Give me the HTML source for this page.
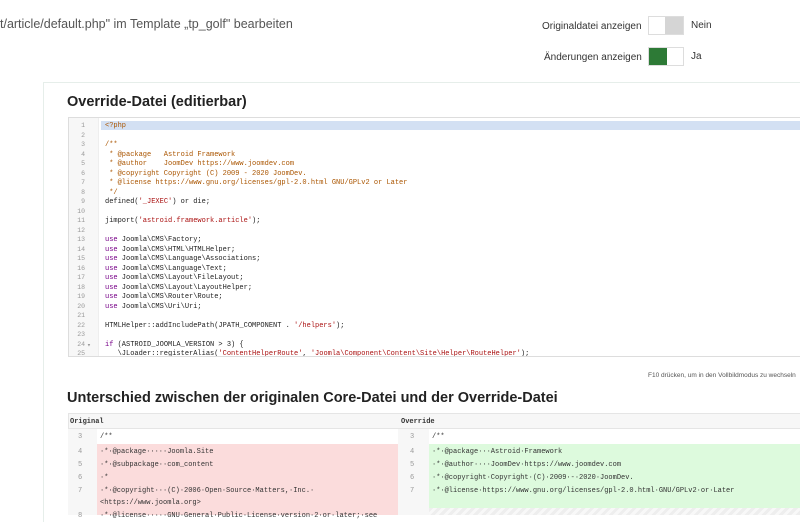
<!DOCTYPE html>
<html><head><meta charset="utf-8"><style>
*{margin:0;padding:0;box-sizing:border-box}
body{width:800px;height:515px;overflow:hidden;background:#fff;font-family:"Liberation Sans",sans-serif;position:relative;color:#333}
.a{position:absolute;white-space:pre}
.mono{font-family:"Liberation Mono","DejaVu Sans Mono",monospace}
.ed{position:absolute;left:68px;top:117px;width:740px;height:240px;border:1px solid #ddd;background:#fff;overflow:hidden}
.gut{position:absolute;left:0;top:0;width:30px;height:100%;background:#f7f7f7;border-right:1px solid #eee}
.ln{position:absolute;left:0;width:16px;text-align:right;font-size:6.5px;color:#999}
.cd{position:absolute;left:36px;font-size:7px;color:#222}
.c{color:#a50}.s{color:#a11}.k{color:#708}
.dn{position:absolute;font-size:7px;color:#999}
.dt{color:#333}
</style></head><body>
<div class="a" style="left:0;top:17px;font-size:12.5px;color:#555">t/article/default.php" im Template „tp_golf" bearbeiten</div>
<div class="a" style="left:542px;top:21px;font-size:10px;color:#333">Originaldatei anzeigen</div>
<div style="position:absolute;left:648px;top:16px;width:36px;height:19px;border:1px solid #ddd;background:#fff"><div style="position:absolute;right:0;top:0;width:18px;height:17px;background:#d5d5d5"></div></div>
<div class="a" style="left:691px;top:20px;font-size:10px">Nein</div>
<div class="a" style="left:544px;top:52px;font-size:10px;color:#333">Änderungen anzeigen</div>
<div style="position:absolute;left:648px;top:47px;width:36px;height:19px;border:1px solid #ddd;background:#fff"><div style="position:absolute;left:0;top:0;width:18px;height:17px;background:#2d7a36"></div></div>
<div class="a" style="left:691px;top:51px;font-size:10px">Ja</div>
<div style="position:absolute;left:43px;top:82px;width:770px;height:440px;border-top:1px solid #e6eeea;border-left:1px solid #e6eeea"></div>
<div class="a" style="left:67px;top:94px;font-size:14.5px;font-weight:bold;color:#222">Override-Datei (editierbar)</div>
<div class="ed mono">
<div class="gut"></div>
<div style="position:absolute;left:32px;top:3px;width:740px;height:9px;background:#d3e0f3"></div>
<div id="L"></div>
</div>
<div class="a" style="left:648px;top:372px;font-size:6.5px;color:#555">F10 drücken, um in den Vollbildmodus zu wechseln</div>
<div class="a" style="left:67px;top:390px;font-size:14.5px;font-weight:bold;color:#222">Unterschied zwischen der originalen Core-Datei und der Override-Datei</div>
<div style="position:absolute;left:68px;top:413px;width:740px;height:16px;background:#f7f7f7;border:1px solid #e5e5e5"></div>
<div class="a mono" style="left:70px;top:418px;font-size:7px;font-weight:bold">Original</div>
<div class="a mono" style="left:401px;top:418px;font-size:7px;font-weight:bold">Override</div>
<div style="position:absolute;left:68px;top:429px;width:330px;height:86px;background:#f7f7f7"></div>
<div style="position:absolute;left:398px;top:429px;width:402px;height:86px;background:#f7f7f7"></div>
<div style="position:absolute;left:97px;top:429px;width:301px;height:15px;background:#fff"></div>
<div style="position:absolute;left:97px;top:444px;width:301px;height:71px;background:#fbdcdc"></div>
<div style="position:absolute;left:429px;top:429px;width:371px;height:15px;background:#fff"></div>
<div style="position:absolute;left:429px;top:444px;width:371px;height:64px;background:#ddfadd"></div>
<div style="position:absolute;left:429px;top:508px;width:371px;height:7px;background:repeating-linear-gradient(135deg,#eee 0 3px,#f8f8f8 3px 6px)"></div>
<div class="mono dt">
<div class="dn" style="left:78px;top:433px">3</div><div class="a" style="left:100px;top:433px;font-size:7px">/**</div>
<div class="dn" style="left:78px;top:448px">4</div><div class="a" style="left:100px;top:448px;font-size:7px">·*·@package·····Joomla.Site</div>
<div class="dn" style="left:78px;top:461px">5</div><div class="a" style="left:100px;top:461px;font-size:7px">·*·@subpackage··com_content</div>
<div class="dn" style="left:78px;top:474px">6</div><div class="a" style="left:100px;top:474px;font-size:7px">·*</div>
<div class="dn" style="left:78px;top:487px">7</div><div class="a" style="left:100px;top:487px;font-size:7px">·*·@copyright···(C)·2006·Open·Source·Matters,·Inc.·</div>
<div class="a" style="left:100px;top:499px;font-size:7px">&lt;https://www.joomla.org&gt;</div>
<div class="dn" style="left:78px;top:512px">8</div><div class="a" style="left:100px;top:512px;font-size:7px">·*·@license·····GNU·General·Public·License·version·2·or·later;·see</div>
<div class="dn" style="left:410px;top:433px">3</div><div class="a" style="left:432px;top:433px;font-size:7px">/**</div>
<div class="dn" style="left:410px;top:448px">4</div><div class="a" style="left:432px;top:448px;font-size:7px">·*·@package···Astroid·Framework</div>
<div class="dn" style="left:410px;top:461px">5</div><div class="a" style="left:432px;top:461px;font-size:7px">·*·@author····JoomDev·https://www.joomdev.com</div>
<div class="dn" style="left:410px;top:474px">6</div><div class="a" style="left:432px;top:474px;font-size:7px">·*·@copyright·Copyright·(C)·2009·-·2020·JoomDev.</div>
<div class="dn" style="left:410px;top:487px">7</div><div class="a" style="left:432px;top:487px;font-size:7px">·*·@license·https://www.gnu.org/licenses/gpl-2.0.html·GNU/GPLv2·or·Later</div>
</div>
<script>
var L=[
'<span class="c">&lt;?php</span>','',
'<span class="c">/**</span>',
'<span class="c"> * @package   Astroid Framework</span>',
'<span class="c"> * @author    JoomDev https://www.joomdev.com</span>',
'<span class="c"> * @copyright Copyright (C) 2009 - 2020 JoomDev.</span>',
'<span class="c"> * @license https://www.gnu.org/licenses/gpl-2.0.html GNU/GPLv2 or Later</span>',
'<span class="c"> */</span>',
'defined(<span class="s">\'_JEXEC\'</span>) or die;','',
'jimport(<span class="s">\'astroid.framework.article\'</span>);','',
'<span class="k">use</span> Joomla\\CMS\\Factory;',
'<span class="k">use</span> Joomla\\CMS\\HTML\\HTMLHelper;',
'<span class="k">use</span> Joomla\\CMS\\Language\\Associations;',
'<span class="k">use</span> Joomla\\CMS\\Language\\Text;',
'<span class="k">use</span> Joomla\\CMS\\Layout\\FileLayout;',
'<span class="k">use</span> Joomla\\CMS\\Layout\\LayoutHelper;',
'<span class="k">use</span> Joomla\\CMS\\Router\\Route;',
'<span class="k">use</span> Joomla\\CMS\\Uri\\Uri;','',
'HTMLHelper::addIncludePath(JPATH_COMPONENT . <span class="s">\'/helpers\'</span>);','',
'<span class="k">if</span> (ASTROID_JOOMLA_VERSION &gt; 3) {',
'   \\JLoader::registerAlias(<span class="s">\'ContentHelperRoute\'</span>, <span class="s">\'Joomla\\Component\\Content\\Site\\Helper\\RouteHelper\'</span>);',
'} else {'];
var h='';for(var i=0;i<L.length;i++){var t=4+i*9.5;h+='<div class="ln" style="top:'+t+'px">'+(i+1)+'</div>'+(i==23?'<div class="ln" style="left:18px;width:8px;text-align:left;top:'+t+'px">▾</div>':'')+'<div class="cd a" style="top:'+t+'px">'+L[i]+'</div>';}
document.getElementById('L').innerHTML=h;
</script>
</body></html>
